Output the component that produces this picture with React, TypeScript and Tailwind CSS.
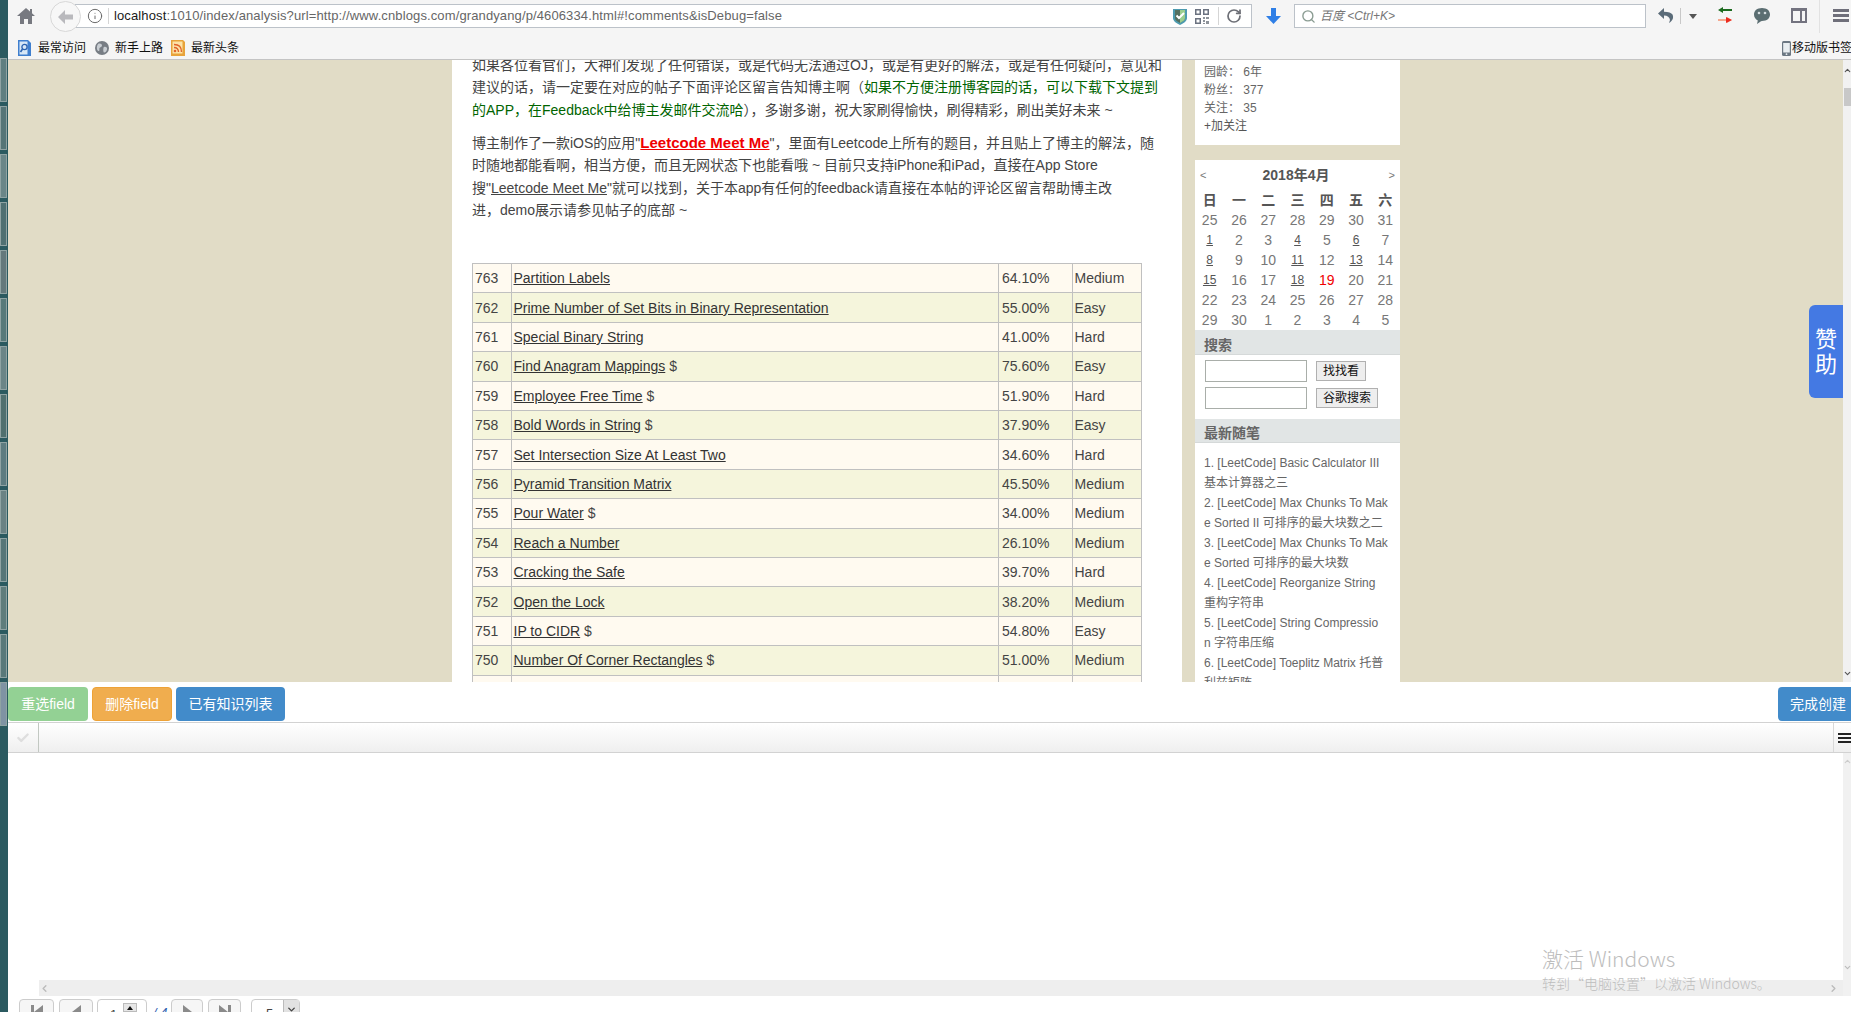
import { Check, Info, Search, RotateCw, ChevronLeft, ChevronRight, ChevronUp, ChevronDown } from "lucide-react";

const problems = [
  { id: 763, title: "Partition Labels", rate: "64.10%", level: "Medium" },
  { id: 762, title: "Prime Number of Set Bits in Binary Representation", rate: "55.00%", level: "Easy" },
  { id: 761, title: "Special Binary String", rate: "41.00%", level: "Hard" },
  { id: 760, title: "Find Anagram Mappings", locked: true, rate: "75.60%", level: "Easy" },
  { id: 759, title: "Employee Free Time", locked: true, rate: "51.90%", level: "Hard" },
  { id: 758, title: "Bold Words in String", locked: true, rate: "37.90%", level: "Easy" },
  { id: 757, title: "Set Intersection Size At Least Two", rate: "34.60%", level: "Hard" },
  { id: 756, title: "Pyramid Transition Matrix", rate: "45.50%", level: "Medium" },
  { id: 755, title: "Pour Water", locked: true, rate: "34.00%", level: "Medium" },
  { id: 754, title: "Reach a Number", rate: "26.10%", level: "Medium" },
  { id: 753, title: "Cracking the Safe", rate: "39.70%", level: "Hard" },
  { id: 752, title: "Open the Lock", rate: "38.20%", level: "Medium" },
  { id: 751, title: "IP to CIDR", locked: true, rate: "54.80%", level: "Easy" },
  { id: 750, title: "Number Of Corner Rectangles", locked: true, rate: "51.00%", level: "Medium" },
];

const weekDays = ["日", "一", "二", "三", "四", "五", "六"];
const days = [25, 26, 27, 28, 29, 30, 31, 1, 2, 3, 4, 5, 6, 7, 8, 9, 10, 11, 12, 13, 14, 15, 16, 17, 18, 19, 20, 21, 22, 23, 24, 25, 26, 27, 28, 29, 30, 1, 2, 3, 4, 5];
const linkedDays = [7, 10, 12, 14, 17, 19, 21, 24];
const todayIndex = 25;

const recentPosts = [
  "1. [LeetCode] Basic Calculator III",
  "基本计算器之三",
  "2. [LeetCode] Max Chunks To Mak",
  "e Sorted II 可排序的最大块数之二",
  "3. [LeetCode] Max Chunks To Mak",
  "e Sorted 可排序的最大块数",
  "4. [LeetCode] Reorganize String",
  "重构字符串",
  "5. [LeetCode] String Compressio",
  "n 字符串压缩",
  "6. [LeetCode] Toeplitz Matrix 托普",
  "利兹矩阵",
];

const thumbs = ["#5f7f80", "#557577", "#6a8688", "#4f7072", "#64797c", "#587a7a", "#6b8587", "#50706f", "#5d7c80", "#6a8284", "#567678", "#5f7d7c", "#59797a", "#7f93a3"];

function Toolbar() {
  return (
    <div className="h-[37px] shrink-0 flex items-start bg-[#f5f5f5] relative">
      <svg width="20" height="18" viewBox="0 0 20 18" className="ml-[8px] mt-[7px] shrink-0">
        <path d="M10 1 1 9h3v8h4v-5h4v5h4V9h3l-3-2.700V2h-2v2.500z" fill="#777980" />
      </svg>
      <div className="ml-[14px] mt-[1px] w-[31px] h-[31px] rounded-full bg-[#f7f7f7] border border-[#d8d8d8] flex items-center justify-center z-10 shrink-0">
        <svg width="15" height="14" viewBox="0 0 15 14">
          <path d="M7 0 0 7l7 7V9.500h8v-5H7z" fill="#b9b9bd" />
        </svg>
      </div>
      <div className="-ml-[6px] mt-[4px] w-[1177px] h-[24px] bg-white border border-[#bcc2c9] flex items-center shrink-0">
        <Info size={16} strokeWidth={1.5} className="ml-[11px] text-[#6b6b6b] shrink-0" />
        <div className="ml-[5px] h-[16px] w-px bg-[#d5d5d5]" />
        <div className="ml-[5px] text-[13px] text-[#666] whitespace-nowrap tracking-[0.12px]">
          <span className="text-[#1a1a1a]">localhost</span>:1010/index/analysis?url=http://www.cnblogs.com/grandyang/p/4606334.html#!comments&amp;isDebug=false
        </div>
        <div className="ml-auto flex items-center">
          <svg width="14" height="17" viewBox="0 0 14 17">
            <path d="M0 1h14v9c0 3-3 5-7 7-4-2-7-4-7-7z" fill="#4d9bb0" />
            <path d="M2 2h10v8c0 2-2 3.500-5 5-3-1.500-5-3-5-5z" fill="#55705f" />
            <path d="M7 2h5v8c0 2-2 3.500-5 5z" fill="#9ccf8f" />
            <path d="m3.500 7.500 2.500 2.500 5-5" fill="none" stroke="#fff" strokeWidth="2" />
          </svg>
          <svg width="14" height="15" viewBox="0 0 14 15" className="ml-[8px]" fill="#6b7280">
            <path d="M0 0h6v6H0zm1.500 1.500v3h3v-3zM8 0h6v6H8zm1.500 1.500v3h3v-3zM0 9h6v6H0zm1.500 1.500v3h3v-3z" fillRule="evenodd" />
            <path d="M8 8h2v2H8zm3 0h3v2h-3zm-3 3h2v2H8zm3 1h3v3h-3zm-3 2h2v1H8z" fill="#8e939a" />
          </svg>
          <div className="ml-[9px] h-[18px] w-px bg-[#d5d5d5]" />
          <RotateCw size={16} strokeWidth={2.6} className="ml-[7px] mr-[9px] text-[#6d6f76]" />
        </div>
      </div>
      <svg width="15" height="16" viewBox="0 0 15 16" className="ml-[14px] mt-[8px] shrink-0">
        <path d="M5 0h5v8h5l-7.500 8L0 8h5z" fill="#2f7fe6" />
      </svg>
      <div className="ml-[13px] mt-[4px] w-[352px] h-[24px] bg-white border border-[#bcc2c9] flex items-center shrink-0">
        <Search size={15} strokeWidth={2.2} className="ml-[6px] text-[#8a9c92]" />
        <span className="ml-[4px] text-[12px] italic text-[#777]">百度 &lt;Ctrl+K&gt;</span>
      </div>
      <svg width="16" height="16" viewBox="0 0 16 16" className="ml-[12px] mt-[8px] shrink-0">
        <path d="M6 0 0 5.500 6 11V7.500c3.500 0 5.500 1.500 6 4.500l-1 3c3.500-2 5-5 3.500-8.500C13.500 5 10.500 3.800 6 3.800z" fill="#5a6b78" />
      </svg>
      <div className="ml-[6px] mt-[8px] h-[16px] w-px bg-[#c8c8c8] shrink-0" />
      <div className="ml-[8px] mt-[14px] border-x-[4px] border-x-transparent border-t-[5px] border-t-[#555] shrink-0" />
      <svg width="14" height="17" viewBox="0 0 14 17" className="ml-[21px] mt-[7px] shrink-0">
        <path d="M0 3 5 0v2h9v2H5v2z" fill="#1c6b1f" />
        <path d="M0 12h9v-2l5 3-5 3v-2H0z" fill="#f5a98f" />
        <path d="M8 10v6l6-3z" fill="#ec2a20" />
      </svg>
      <svg width="18" height="18" viewBox="0 0 18 18" className="ml-[21px] mt-[7px] shrink-0">
        <path d="M9 1c5 0 8 2.800 8 6.500S14 14 9 14l-1 .2L4 17l.8-3.600C2.500 12.300 1 10.200 1 7.500 1 3.800 4 1 9 1z" fill="#5b6e72" />
        <circle cx="6" cy="6" r="1.300" fill="#d5dde0" />
        <circle cx="12" cy="6" r="1.300" fill="#d5dde0" />
      </svg>
      <svg width="16" height="15" viewBox="0 0 16 15" className="ml-[20px] mt-[8px] shrink-0">
        <path d="M0 0h16v15H0zm2 3v10h7V3zm9 0v10h3V3z" fill="#73737f" fillRule="evenodd" />
      </svg>
      <div className="ml-[12px] h-[33px] w-px bg-[#e2e2e2] shrink-0" />
      <div className="ml-[13px] mt-[9px] w-[16px] h-[13px] flex flex-col justify-between shrink-0">
        <div className="h-[3px] bg-[#6f6f7a]" />
        <div className="h-[3px] bg-[#6f6f7a]" />
        <div className="h-[3px] bg-[#6f6f7a]" />
      </div>
    </div>
  );
}

function Bookmarks() {
  return (
    <div className="h-[23px] shrink-0 flex items-center bg-[#f5f5f5] border-b border-[#c4c4c4] text-[12px] text-[#111] whitespace-nowrap">
      <svg width="14" height="16" viewBox="0 0 14 16" className="ml-[10px]">
        <path d="M0 0h10l3 3v13H0z" fill="#3f7fcf" />
        <path d="M1.500 1.500h8v13h-8z" fill="#d8e8f7" />
        <circle cx="6.500" cy="7" r="2.600" fill="none" stroke="#2a62b0" strokeWidth="1.300" />
        <path d="m4.500 9-2 3" stroke="#2a62b0" strokeWidth="1.600" />
      </svg>
      <span className="ml-[6px]">最常访问</span>
      <svg width="14" height="14" viewBox="0 0 14 14" className="ml-[9px]">
        <circle cx="7" cy="7" r="7" fill="#777d84" />
        <path d="M3 3c2-1 4 0 4 1.500S5 6 4.500 7 5 10 3.500 10 1 6 3 3zm6 3c2-.5 3.500.5 3 2.500S10 12 9 11.500 8 6.500 9 6z" fill="#c9ced3" />
      </svg>
      <span className="ml-[6px]">新手上路</span>
      <svg width="14" height="16" viewBox="0 0 14 16" className="ml-[8px]">
        <path d="M0 0h12l2 2v14H0z" fill="#e8a33a" />
        <path d="M1.500 1.500h10v12h-10z" fill="#fde3a7" />
        <circle cx="4" cy="11" r="1.300" fill="#e0632a" />
        <path d="M3 7.500c3 0 4.500 1.500 4.500 4.500M3 4.500c5 0 7.500 2.500 7.500 7.500" fill="none" stroke="#e0632a" strokeWidth="1.400" />
      </svg>
      <span className="ml-[6px]">最新头条</span>
      <div className="ml-auto flex items-center -mr-[1px]">
        <svg width="9" height="15" viewBox="0 0 9 15">
          <rect width="9" height="15" rx="1.500" fill="#6c7883" />
          <rect x="1.200" y="2" width="6.600" height="9.500" fill="#e9eef1" />
          <circle cx="4.500" cy="13.200" r=".9" fill="#e9eef1" />
        </svg>
        <span className="ml-[1px]">移动版书签</span>
      </div>
    </div>
  );
}

function Article() {
  return (
    <div className="w-[730px] shrink-0 bg-white pl-[20px] -mt-[6px] text-[14px] leading-[22.4px] text-[#444] whitespace-nowrap">
      <p>如果各位看官们，大神们发现了任何错误，或是代码无法通过OJ，或是有更好的解法，或是有任何疑问，意见和</p>
      <p>
        建议的话，请一定要在对应的帖子下面评论区留言告知博主啊（<span className="text-[#006400]">如果不方便注册博客园的话，可以下载下文提到</span>
      </p>
      <p>
        <span className="text-[#006400]">的APP，在Feedback中给博主发邮件交流哈</span>），多谢多谢，祝大家刷得愉快，刷得精彩，刷出美好未来 ~
      </p>
      <div className="mt-[10.600px]">
        <p>
          博主制作了一款iOS的应用"<a className="text-[15px] font-bold text-[#f00000] underline">Leetcode Meet Me</a>"，里面有Leetcode上所有的题目，并且贴上了博主的解法，随
        </p>
        <p>时随地都能看啊，相当方便，而且无网状态下也能看哦 ~ 目前只支持iPhone和iPad，直接在App Store</p>
        <p>
          搜"<a className="underline">Leetcode Meet Me</a>"就可以找到，关于本app有任何的feedback请直接在本帖的评论区留言帮助博主改
        </p>
        <p>进，demo展示请参见帖子的底部 ~</p>
      </div>
      <table className="mt-[41.600px] w-[669px] table-fixed border-collapse text-[14px] leading-[20px] text-[#444]">
        <colgroup>
          <col className="w-[38.500px]" />
          <col className="w-[487.500px]" />
          <col className="w-[73.500px]" />
          <col className="w-[69.500px]" />
        </colgroup>
        <tbody>
          {problems.map((p, i) => (
            <tr key={p.id} className={`h-[29.400px] ${i % 2 === 0 ? "bg-[#fffaf0]" : "bg-[#f5f5dc]"}`}>
              <td className="border border-[#c0c0c0] pl-[2px] py-0">{p.id}</td>
              <td className="border border-[#c0c0c0] pl-[2px] py-0">
                <a className="underline text-[#333]">{p.title}</a>
                {p.locked && " $"}
              </td>
              <td className="border border-[#c0c0c0] pl-[3px] py-0">{p.rate}</td>
              <td className="border border-[#c0c0c0] pl-[2px] py-0">{p.level}</td>
            </tr>
          ))}
          <tr className="h-[29.400px] bg-[#fffaf0]">
            <td className="border border-[#c0c0c0]" />
            <td className="border border-[#c0c0c0]" />
            <td className="border border-[#c0c0c0]" />
            <td className="border border-[#c0c0c0]" />
          </tr>
        </tbody>
      </table>
    </div>
  );
}

function Sidebar() {
  return (
    <div className="ml-[13px] w-[205px] shrink-0 text-[12px] text-[#666]">
      <div className="bg-white h-[85px] pt-[3px] pl-[9px] leading-[18px]">
        <div>园龄： 6年</div>
        <div>粉丝： 377</div>
        <div>关注： 35</div>
        <div className="text-[#555]">+加关注</div>
      </div>
      <div className="mt-[15px] bg-white">
        <div className="h-[30px] flex items-center justify-between px-[5px] text-[#777]">
          <span className="text-[11px]">&lt;</span>
          <span className="text-[14px] font-bold text-[#555] -ml-[3px]">2018年4月</span>
          <span className="text-[11px]">&gt;</span>
        </div>
        <div className="grid grid-cols-7 text-center text-[14px] leading-[20px]">
          {weekDays.map((d) => (
            <div key={d} className="h-[20px] font-bold text-[#555]">{d}</div>
          ))}
          {days.map((d, i) => {
            if (i === todayIndex) return <div key={i} className="h-[20px] text-[#f00000]">{d}</div>;
            if (linkedDays.includes(i))
              return (
                <div key={i} className="h-[20px]">
                  <a className="inline-block align-top text-[12px] leading-[20px] underline text-[#555]">{d}</a>
                </div>
              );
            return <div key={i} className="h-[20px] text-[#777]">{d}</div>;
          })}
        </div>
        <div className="h-[25px] bg-[#e1e5e5] border-b border-[#d5d9d9] pl-[9px] pt-[5px] text-[14px] leading-[20px] font-bold text-[#666]">搜索</div>
        <div className="h-[64px] pl-[10px] pt-[5px] flex flex-col gap-[5px]">
          <div className="flex items-center h-[22px]">
            <input className="w-[102px] h-[22px] border border-[#a9aea9] bg-white" />
            <button className="ml-[9px] w-[50px] h-[20px] bg-[#eee] border border-[#b0b0b0] text-[12px] leading-[18px] text-[#111]">找找看</button>
          </div>
          <div className="flex items-center h-[22px]">
            <input className="w-[102px] h-[22px] border border-[#a9aea9] bg-white" />
            <button className="ml-[9px] w-[62px] h-[20px] bg-[#eee] border border-[#b0b0b0] text-[12px] leading-[18px] text-[#111]">谷歌搜索</button>
          </div>
        </div>
        <div className="h-[24px] bg-[#e1e5e5] border-b border-[#d5d9d9] pl-[9px] pt-[4px] text-[14px] leading-[20px] font-bold text-[#666]">最新随笔</div>
        <div className="pl-[9px] pt-[10px] leading-[20px] whitespace-nowrap">
          {recentPosts.map((line) => (
            <div key={line}>{line}</div>
          ))}
        </div>
      </div>
    </div>
  );
}

function PageScrollbar() {
  return (
    <div className="absolute right-0 top-0 bottom-0 w-[8px] bg-[#f1f1f1] flex flex-col">
      <ChevronUp size={9} strokeWidth={3} className="mt-[6px] text-[#555]" />
      <div className="mt-[13px] h-[18px] ml-px bg-[#c8c8c8]" />
      <ChevronDown size={9} strokeWidth={3} className="mt-auto mb-[4px] text-[#555]" />
    </div>
  );
}

function PageFrame() {
  return (
    <div className="relative h-[622px] shrink-0 overflow-hidden bg-[#e1dcc6] flex pl-[444px]">
      <Article />
      <Sidebar />
      <div className="absolute right-[8px] top-[245px] w-[34px] h-[93px] rounded-l-[6px] bg-[#4479e3] flex flex-col items-center justify-center text-white text-[22px] leading-[25px]">
        <span>赞</span>
        <span>助</span>
      </div>
      <PageScrollbar />
    </div>
  );
}

function ActionBar() {
  return (
    <div className="h-[40px] shrink-0 pt-[5px] flex text-[14px] text-white">
      <button className="w-[80px] h-[34px] rounded-[4px] bg-[#93d194]">重选field</button>
      <button className="ml-[4px] w-[80px] h-[34px] rounded-[4px] bg-[#f0ad4e] border border-[#eea236]">删除field</button>
      <button className="ml-[4px] w-[109px] h-[34px] rounded-[4px] bg-[#428bca]">已有知识列表</button>
      <button className="ml-auto w-[73px] h-[34px] rounded-l-[4px] bg-[#428bca] text-left pl-[12px] whitespace-nowrap">完成创建</button>
    </div>
  );
}

function GridHeader() {
  return (
    <div className="h-[31px] shrink-0 flex border-y border-[#d2d2d2] bg-gradient-to-b from-white to-[#efefef]">
      <div className="w-[31px] border-r border-[#c2c8c2] flex items-center justify-center">
        <Check size={14} strokeWidth={4} className="text-[#dedede]" />
      </div>
      <div className="ml-auto w-[18px] border-l border-[#d8d8d8] flex flex-col justify-center gap-[2px] pl-[4px]">
        <div className="h-[2px] bg-[#222]" />
        <div className="h-[2px] bg-[#222]" />
        <div className="h-[2px] bg-[#222]" />
      </div>
    </div>
  );
}

function PagerButton({ width, children }: { width: string; children: React.ReactNode }) {
  return (
    <div className={`${width} h-[30px] rounded-t-[4px] border border-[#ccc] bg-[#f6f6f6] flex justify-center pt-[5px] shrink-0`}>
      {children}
    </div>
  );
}

function Pager() {
  return (
    <div className="h-[30px] mt-[3px] pl-[11px] flex text-[13px] text-[#444]">
      <PagerButton width="w-[35px]">
        <div className="flex">
          <div className="w-[3px] h-[14px] bg-[#8a8a8a]" />
          <div className="border-y-[7px] border-y-transparent border-r-[9px] border-r-[#8a8a8a]" />
        </div>
      </PagerButton>
      <div className="ml-[5px]">
        <PagerButton width="w-[34px]">
          <div className="border-y-[7px] border-y-transparent border-r-[9px] border-r-[#8a8a8a]" />
        </PagerButton>
      </div>
      <div className="ml-[4px] w-[50px] h-[30px] rounded-t-[4px] border border-[#ccc] bg-white flex pl-[12px] pt-[5px] shrink-0">
        <span className="leading-[20px]">1</span>
        <div className="ml-[6px] -mt-[2px] w-[14px] h-[9px] bg-[#e6e6e6] border border-[#bbb] flex items-center justify-center">
          <div className="border-x-[3px] border-x-transparent border-b-[4px] border-b-[#111]" />
        </div>
      </div>
      <span className="ml-[6px] w-[12px] pt-[4px] leading-[20px] text-[#2f5fb0] italic whitespace-nowrap">/ 4</span>
      <div className="ml-[6px]">
        <PagerButton width="w-[32px]">
          <div className="border-y-[7px] border-y-transparent border-l-[9px] border-l-[#8a8a8a]" />
        </PagerButton>
      </div>
      <div className="ml-[5px]">
        <PagerButton width="w-[33px]">
          <div className="flex">
            <div className="border-y-[7px] border-y-transparent border-l-[9px] border-l-[#8a8a8a]" />
            <div className="w-[3px] h-[14px] bg-[#8a8a8a]" />
          </div>
        </PagerButton>
      </div>
      <div className="ml-[10px] w-[49px] h-[30px] rounded-t-[4px] border border-[#ccc] bg-white flex shrink-0">
        <span className="ml-[14px] pt-[4px] leading-[20px]">5</span>
        <div className="ml-auto w-[16px] bg-[#e2e2e2] border-l border-[#bbb] flex justify-center pt-[4px]">
          <ChevronDown size={11} strokeWidth={3} className="text-[#444]" />
        </div>
      </div>
    </div>
  );
}

function GridBody() {
  return (
    <div className="relative h-[259px] shrink-0 overflow-hidden">
      <div className="flex">
        <div className="flex-1 min-w-0">
          <div className="h-[227px]" />
          <div className="ml-[31px] h-[16px] bg-[#eee] flex items-center justify-between text-[#bbb]">
            <ChevronLeft size={11} strokeWidth={3} />
            <ChevronRight size={11} strokeWidth={3} className="mr-[4px]" />
          </div>
        </div>
        <div className="w-[8px] bg-[#f1f1f1] flex flex-col">
          <ChevronUp size={9} strokeWidth={3} className="mt-[4px] text-[#ccc]" />
          <ChevronDown size={9} strokeWidth={3} className="mt-auto mb-[24px] text-[#bbb]" />
        </div>
      </div>
      <Pager />
      <div className="absolute left-[1534px] top-[192px] font-['Noto_Sans_CJK_SC',sans-serif] font-light text-[#bdbdbd] whitespace-nowrap">
        <div className="text-[21px] leading-[26px]">激活 Windows</div>
        <div className="text-[14px] leading-[20px] mt-[2px]">转到“电脑设置”以激活 Windows。</div>
      </div>
    </div>
  );
}

export default function App() {
  return (
    <div className="flex h-[1012px] w-full overflow-hidden bg-white font-['Liberation_Sans','Noto_Sans_CJK_SC',sans-serif]">
      <div className="w-[8px] shrink-0 bg-[#2b5a60] pt-[56px] flex flex-col">
        {thumbs.map((c, i) => (
          <div key={i} className="h-[48px] py-[2px] pr-px shrink-0">
            <div className="h-full border border-[#8fa3a3]" style={{ backgroundColor: c }} />
          </div>
        ))}
      </div>
      <div className="flex-1 min-w-0 flex flex-col">
        <Toolbar />
        <Bookmarks />
        <PageFrame />
        <ActionBar />
        <GridHeader />
        <GridBody />
      </div>
    </div>
  );
}
